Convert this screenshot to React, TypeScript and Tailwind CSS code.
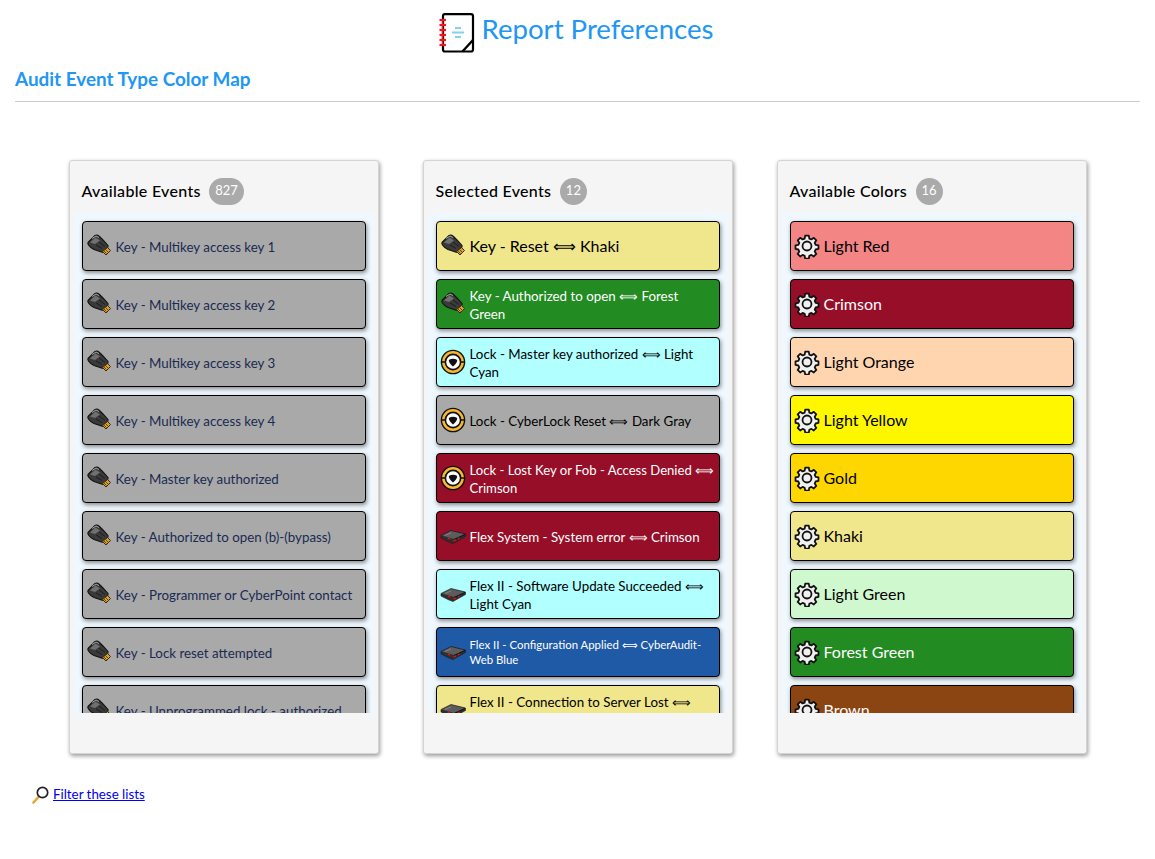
const KeyIcon = () => (
  <svg viewBox="0 0 26 26" className="w-[26px] h-[26px] shrink-0">
    <path d="M2 9.5 L9 2.5 Q11 1.5 13.5 3.5 L17 7 L22 12.5 Q22.5 14 21 15.5 L17.5 19 Q16 19.5 14 18.5 L8 16.5 Q4 14.5 2.5 12 Q1.5 10.5 2 9.5Z" fill="#3a3a3a" stroke="#111" strokeWidth="1.1" />
    <path d="M4 9.5 L9.5 4.5 L14 7.5 L9 11 Z" fill="#707070" />
    <path d="M6 5.5 L10 3 L13 4.5" fill="none" stroke="#a5a5a5" strokeWidth="1" />
    <path d="M10 12 L16 15.5 M13 9 L19 13.5" stroke="#1c1c1c" strokeWidth="1" />
    <path d="M16.5 18.5 L21.5 14.5 L24.5 17.5 L20 22 Z" fill="#d9a02a" stroke="#3a2a10" strokeWidth="1" />
    <path d="M19.5 16.5 L22.5 19.5 M18 18 L20.5 20.5" stroke="#5a3d10" strokeWidth="0.9" />
  </svg>
)

const LockIcon = () => (
  <svg viewBox="0 0 26 26" className="w-[26px] h-[26px] shrink-0">
    <circle cx="13" cy="13" r="11.6" fill="#f7b731" stroke="#111" strokeWidth="1.4" />
    <path d="M1 13 H5 M21 13 H25" stroke="#111" strokeWidth="1.4" />
    <circle cx="13" cy="13" r="7.6" fill="#fff" stroke="#111" strokeWidth="1.6" />
    <path d="M8.8 11 Q13 8.5 17.2 11 Q17.4 14 13 17.4 Q8.6 14 8.8 11Z" fill="#111" />
  </svg>
)

const FlexIcon = () => (
  <svg viewBox="0 0 26 26" className="w-[26px] h-[26px] shrink-0">
    <path d="M1 12.5 L11 7.5 L25.5 11 L25.5 13.5 L13 20.5 L9 19 L1 15Z" fill="#2f2f2f" stroke="#1a1a1a" strokeWidth="0.6" />
    <path d="M2 12.5 L11 8 L24.5 11.2 L14 16 Z" fill="#5c5c5c" />
    <path d="M5 12.5 L11 10" stroke="#8a8a8a" strokeWidth="0.8" />
    <path d="M14 16.5 L25 11.5" stroke="#111" strokeWidth="1" />
    <path d="M13.5 18 L16 17 M18 15.8 L19.5 15 M8 15 L10 16" stroke="#d11" strokeWidth="1.5" />
  </svg>
)

const GearIcon = () => (
  <svg viewBox="-1.5 -1.5 29 29" className="w-[26px] h-[26px] shrink-0">
    <path
      d="M11 1.5h4l.6 3.2 2.3 1 2.7-1.8 2.8 2.8-1.8 2.7 1 2.3 3.2.6v4l-3.2.6-1 2.3 1.8 2.7-2.8 2.8-2.7-1.8-2.3 1-.6 3.2h-4l-.6-3.2-2.3-1-2.7 1.8-2.8-2.8 1.8-2.7-1-2.3-3.2-.6v-4l3.2-.6 1-2.3-1.8-2.7 2.8-2.8 2.7 1.8 2.3-1z"
      fill="#f0f0f0"
      stroke="#111"
      strokeWidth="2"
      strokeLinejoin="round"
    />
    <circle cx="13" cy="13" r="5" fill="none" stroke="#111" strokeWidth="2" />
  </svg>
)

const NotebookIcon = () => (
  <svg viewBox="0 0 36 40" className="w-[36px] h-[40px] shrink-0">
    <path d="M4 3 Q4 1.2 5.8 1.2 H32 Q34 1.2 34 3.2 V36.5 Q34 38.5 32 38.5 H6 Q4 38.5 4 36.5Z" fill="#fff" stroke="#000" strokeWidth="2.2" />
    <path d="M34 27 L23.5 38.5" stroke="#000" strokeWidth="2.4" />
    <path d="M16 15 H22 M13 19.5 H25 M16 24 H22" stroke="#83d0f0" strokeWidth="2" />
    <path d="M3.5 7 V33" stroke="#f0141e" strokeWidth="1.4" />
    {[7, 12, 17, 22, 27, 32].map(y => (
      <path key={y} d={`M0.5 ${y} H7`} stroke="#f0141e" strokeWidth="2.2" />
    ))}
  </svg>
)

const icons = { key: KeyIcon, lock: LockIcon, flex: FlexIcon, gear: GearIcon }

type Item = {
  label: string
  icon: keyof typeof icons
  bg: string
  text: string
  size: string
}

const gray = 'bg-[#a9a9a9]'
const navy = 'text-[#1a2a52]'
const small = 'text-[13.33px] pt-px'

const available: Item[] = [
  'Key - Multikey access key 1',
  'Key - Multikey access key 2',
  'Key - Multikey access key 3',
  'Key - Multikey access key 4',
  'Key - Master key authorized',
  'Key - Authorized to open (b)-(bypass)',
  'Key - Programmer or CyberPoint contact',
  'Key - Lock reset attempted',
  'Key - Unprogrammed lock - authorized',
].map(label => ({ label, icon: 'key', bg: gray, text: navy, size: small }))

const selected: Item[] = [
  { label: 'Key - Reset ⟺ Khaki', icon: 'key', bg: 'bg-[#f0e68c]', text: 'text-black', size: 'text-[16px]' },
  { label: 'Key - Authorized to open ⟺ Forest Green', icon: 'key', bg: 'bg-[#228b22]', text: 'text-white', size: small },
  { label: 'Lock - Master key authorized ⟺ Light Cyan', icon: 'lock', bg: 'bg-[#b2ffff]', text: 'text-black', size: small },
  { label: 'Lock - CyberLock Reset ⟺ Dark Gray', icon: 'lock', bg: gray, text: 'text-black', size: small },
  { label: 'Lock - Lost Key or Fob - Access Denied ⟺ Crimson', icon: 'lock', bg: 'bg-[#960e28]', text: 'text-white', size: 'text-[13.1px] pt-px' },
  { label: 'Flex System - System error ⟺ Crimson', icon: 'flex', bg: 'bg-[#960e28]', text: 'text-white', size: small },
  { label: 'Flex II - Software Update Succeeded ⟺ Light Cyan', icon: 'flex', bg: 'bg-[#b2ffff]', text: 'text-black', size: small },
  { label: 'Flex II - Configuration Applied ⟺ CyberAudit-Web Blue', icon: 'flex', bg: 'bg-[#1f5aa6]', text: 'text-white', size: 'text-[11.4px] leading-[15px]' },
  { label: 'Flex II - Connection to Server Lost ⟺ Khaki', icon: 'flex', bg: 'bg-[#f0e68c]', text: 'text-black', size: small },
]

const colors: Item[] = [
  { label: 'Light Red', bg: 'bg-[#f48585]', text: 'text-black' },
  { label: 'Crimson', bg: 'bg-[#960e28]', text: 'text-white' },
  { label: 'Light Orange', bg: 'bg-[#ffd5b0]', text: 'text-black' },
  { label: 'Light Yellow', bg: 'bg-[#fff700]', text: 'text-black' },
  { label: 'Gold', bg: 'bg-[#ffd700]', text: 'text-black' },
  { label: 'Khaki', bg: 'bg-[#f0e68c]', text: 'text-black' },
  { label: 'Light Green', bg: 'bg-[#d0f8ce]', text: 'text-black' },
  { label: 'Forest Green', bg: 'bg-[#228b22]', text: 'text-white' },
  { label: 'Brown', bg: 'bg-[#8b4513]', text: 'text-white' },
].map(c => ({ ...c, icon: 'gear' as const, size: 'text-[16px]' }))

function Row({ item }: { item: Item }) {
  const Icon = icons[item.icon]
  return (
    <li className={`h-[50px] shrink-0 flex items-center gap-[4px] pl-[3px] pr-[2px] border border-black rounded-[4px] shadow-[1px_2px_4px_rgba(0,0,0,0.45)] leading-[18px] ${item.bg} ${item.text}`}>
      <Icon />
      <span className={item.size}>{item.label}</span>
    </li>
  )
}

function Panel({ title, count, items }: { title: string; count: number; items: Item[] }) {
  return (
    <section className="w-[310px] h-[594px] bg-[#f5f5f5] border border-[#d4d4d4] rounded-[3px] shadow-[1px_2px_4px_rgba(0,0,0,0.4)] px-[4px]">
      <div className="h-[52px] pt-[8px] pl-[8px] flex items-center gap-[8.5px] text-black">
        <h3 className="text-[16px] tracking-[0.3px] font-medium">{title}</h3>
        <span className="min-w-[27px] h-[27px] px-[6px] flex items-center justify-center rounded-full bg-[#aaaaaa] text-white text-[13px]">{count}</span>
      </div>
      <ul className="h-[500px] overflow-hidden bg-[#f0f8ff] px-[8px] pt-[8px] flex flex-col gap-[8px]">
        {items.map(item => (
          <Row key={item.label} item={item} />
        ))}
      </ul>
    </section>
  )
}

export default function App() {
  return (
    <div className="w-[1155px] h-[859px] bg-white font-['Lato','Liberation_Sans',sans-serif] overflow-hidden">
      <header className="h-[60px] pt-[13px] pr-[3px] flex items-start justify-center gap-[7px]">
        <NotebookIcon />
        <h1 className="text-[27.6px] leading-[32px] text-[#2196f3]">Report Preferences</h1>
      </header>
      <div className="mx-[15px] h-[42px] border-b border-[#cccccc] pt-[5px]">
        <h2 className="text-[18.9px] font-bold text-[#2196f3]">Audit Event Type Color Map</h2>
      </div>
      <main className="mt-[58px] flex justify-center gap-[44px]">
        <Panel title="Available Events" count={827} items={available} />
        <Panel title="Selected Events" count={12} items={selected} />
        <Panel title="Available Colors" count={16} items={colors} />
      </main>
      <footer className="mt-[31px] ml-[32px] flex items-center gap-[3px] text-[13.33px]">
        <svg viewBox="0 0 18 18" className="w-[18px] h-[18px]">
          <path d="M1.5 16.5 L6 11.5" stroke="#e0aa30" strokeWidth="2.6" strokeLinecap="round" />
          <circle cx="10.5" cy="6.5" r="5.2" fill="#fff" stroke="#222" strokeWidth="1.7" />
        </svg>
        <a href="#" className="text-[#0000ee] underline">Filter these lists</a>
      </footer>
    </div>
  )
}
